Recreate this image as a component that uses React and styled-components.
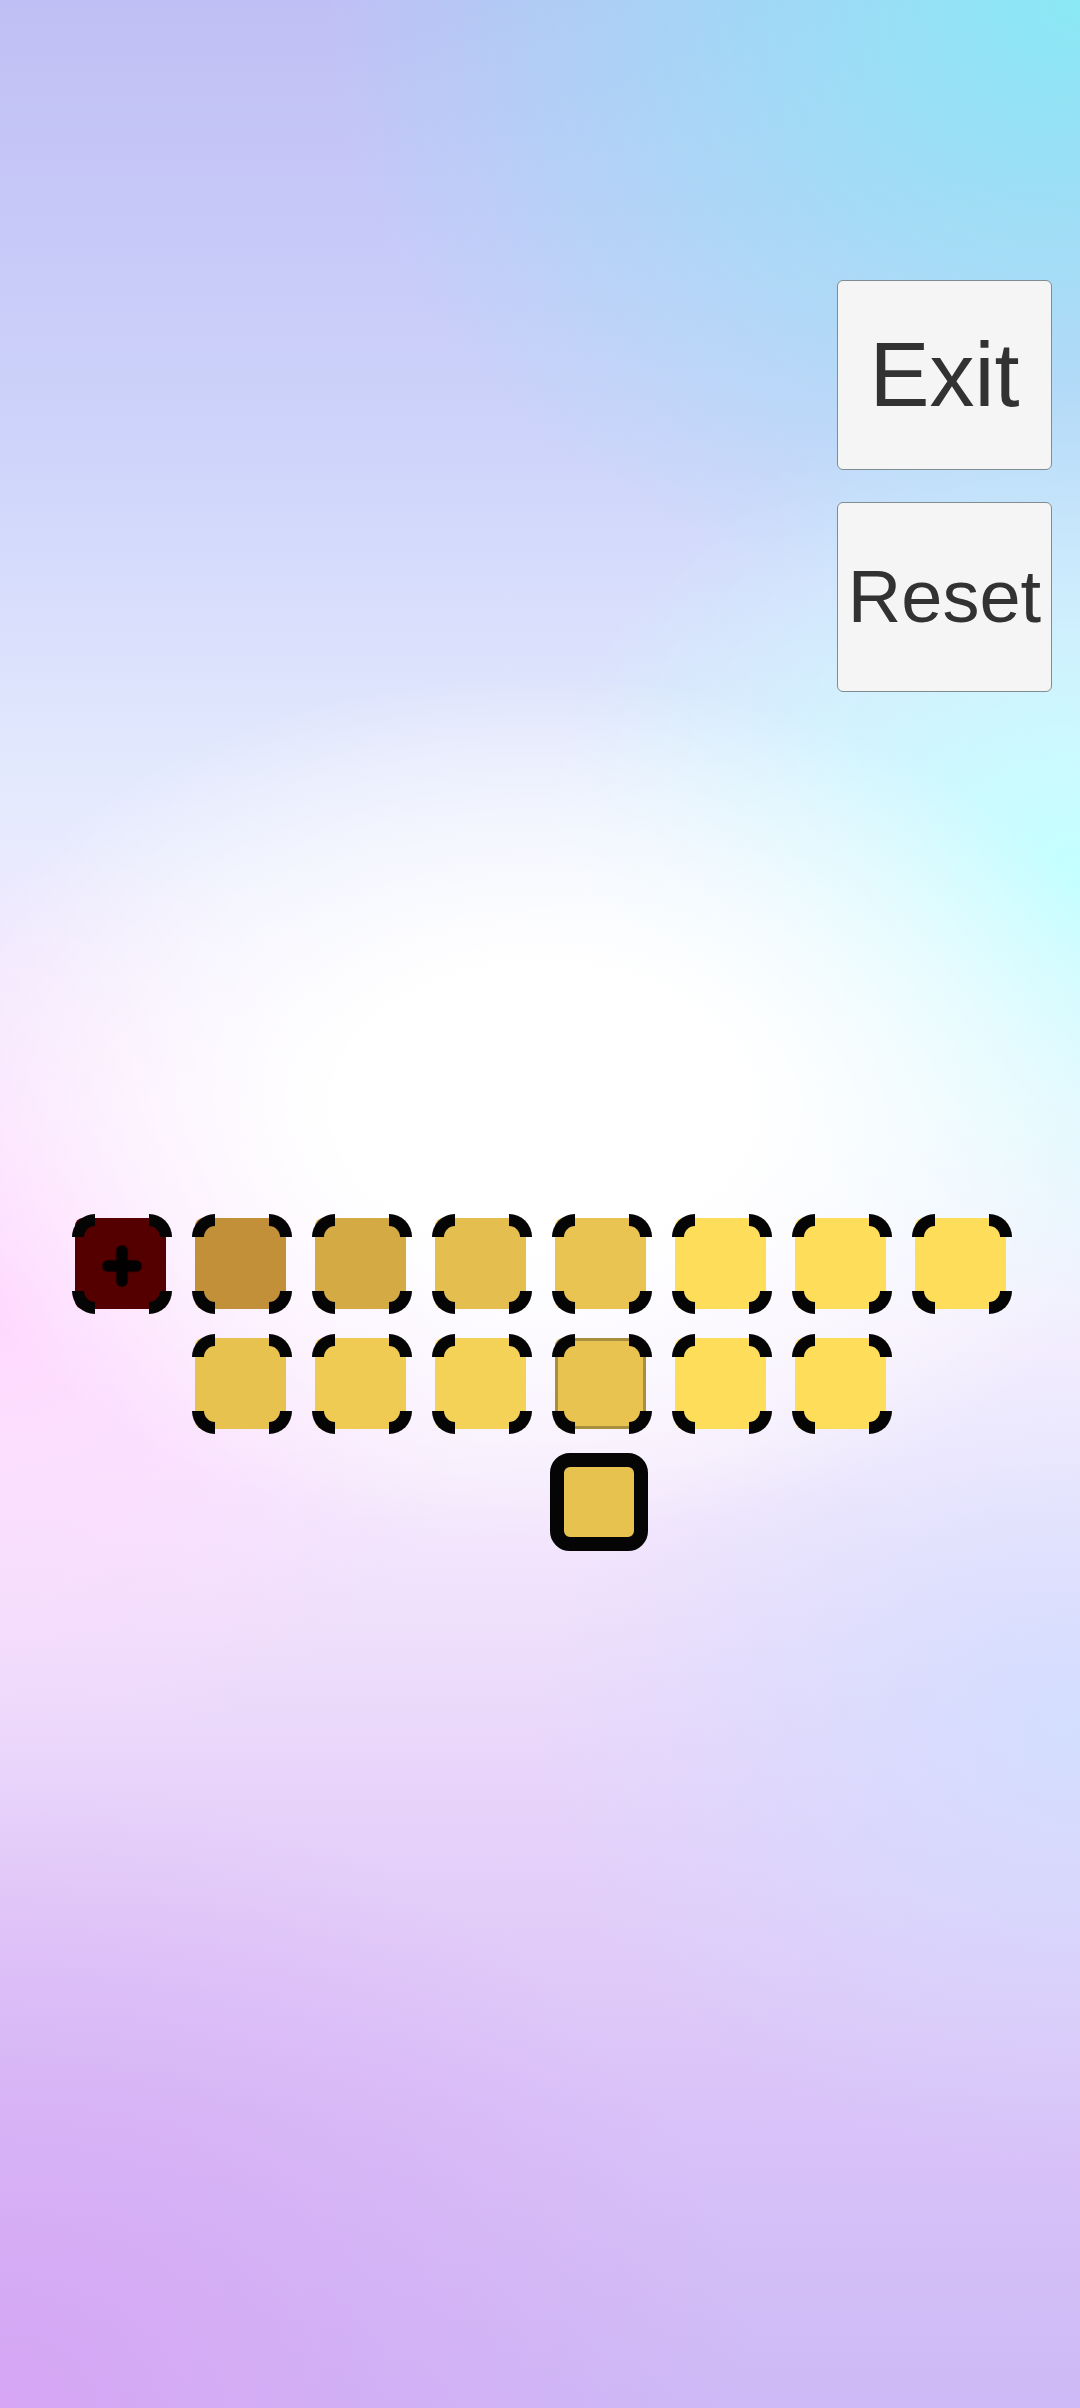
import React from "react";
import styled, { createGlobalStyle } from "styled-components";

const GlobalStyle = createGlobalStyle`
  html, body {
    margin: 0;
    padding: 0;
  }
  body {
    font-family: "Liberation Sans", Arial, sans-serif;
  }
`;

const Screen = styled.div`
  min-height: 2408px;
  width: 1080px;
  display: flex;
  flex-direction: column;
  padding-top: 280px;
  box-sizing: border-box;
  background:
    radial-gradient(ellipse 58% 18% at 50% 46%, #ffffff 0%, #ffffff 32%, rgba(255, 255, 255, 0.55) 65%, rgba(255, 255, 255, 0) 100%),
    radial-gradient(ellipse 50% 20% at 100% 36%, rgba(196, 255, 255, 1) 0%, rgba(196, 255, 255, 0) 100%),
    radial-gradient(ellipse 45% 20% at 0% 54%, rgba(255, 216, 255, 1) 0%, rgba(255, 216, 255, 0) 100%),
    radial-gradient(ellipse 50% 18% at 100% 72%, rgba(208, 222, 255, 0.9) 0%, rgba(208, 222, 255, 0) 100%),
    radial-gradient(ellipse 70% 26% at 100% 0%, rgba(138, 233, 245, 1) 0%, rgba(138, 233, 245, 0) 100%),
    radial-gradient(ellipse 70% 26% at 0% 100%, rgba(214, 166, 244, 1) 0%, rgba(214, 166, 244, 0) 100%),
    linear-gradient(
      to bottom,
      #c0bff5 0%,
      #cdd3fa 18%,
      #e3e9fd 32%,
      #f4f2fe 46%,
      #f6ecfd 60%,
      #e8d4fa 74%,
      #d9c2f8 88%,
      #cdbaf6 100%
    );
`;

const SideButtons = styled.div`
  display: flex;
  flex-direction: column;
  align-items: flex-end;
  gap: 32px;
  padding-right: 28px;
`;

const MenuButton = styled.button`
  width: 215px;
  height: 190px;
  box-sizing: border-box;
  display: flex;
  align-items: center;
  justify-content: center;
  padding: 0;
  background: #f5f5f5;
  border: 1.5px solid #7f8c92;
  border-radius: 6px;
  color: #323232;
  font-family: "Liberation Sans", Arial, sans-serif;
  font-size: ${({ $size }) => $size}px;
  line-height: 1;
  cursor: pointer;
`;

const Board = styled.div`
  margin-top: 522px;
  margin-left: 72px;
  display: grid;
  grid-template-columns: repeat(8, 100px);
  grid-auto-rows: 100px;
  column-gap: 20px;
  row-gap: 20px;
`;

const Slot = styled.div`
  position: relative;
  grid-column: ${({ $col }) => $col};
  grid-row: ${({ $row }) => $row};
`;

const Fill = styled.div`
  position: absolute;
  top: 4px;
  left: 3px;
  right: 6px;
  bottom: 5px;
  box-sizing: border-box;
  border-radius: 8px;
  background: ${({ $color }) => $color};
  border: ${({ $outline }) => ($outline ? `3.5px solid ${$outline}` : "none")};
  display: flex;
  align-items: center;
  justify-content: center;
`;

const Corner = styled.span`
  position: absolute;
  width: 23px;
  height: 23px;
  box-sizing: border-box;
  border: 0 solid #050505;
  ${({ $v }) => $v}: 0;
  ${({ $h }) => $h}: 0;
  border-${({ $v }) => $v}-width: 12px;
  border-${({ $h }) => $h}-width: 12px;
  border-${({ $v }) => $v}-${({ $h }) => $h}-radius: 23px;
`;

const Target = styled.div`
  grid-column: ${({ $col }) => $col};
  grid-row: ${({ $row }) => $row};
  width: 98px;
  height: 98px;
  margin-left: -2px;
  margin-top: -1px;
  box-sizing: border-box;
  border: 14px solid #050505;
  border-radius: 20px;
  background: #e8c24f;
`;

const PlusIcon = styled.svg`
  width: 40px;
  height: 42px;
  margin: 4px 0 0 3px;
`;

const Plus = () => (
  <PlusIcon viewBox="0 0 40 42">
    <path
      d="M20 6 V36 M6 21 H34"
      stroke="#2a0000"
      strokeWidth="12.5"
      strokeLinecap="round"
      fill="none"
    />
    <path
      d="M20 6 V36 M6 21 H34"
      stroke="#020000"
      strokeWidth="10.5"
      strokeLinecap="round"
      fill="none"
    />
  </PlusIcon>
);

const tiles = [
  { row: 1, col: 1, color: "#540000", plus: true },
  { row: 1, col: 2, color: "#c3903a" },
  { row: 1, col: 3, color: "#d4aa45" },
  { row: 1, col: 4, color: "#e4be4e" },
  { row: 1, col: 5, color: "#e9c452" },
  { row: 1, col: 6, color: "#fedd5a" },
  { row: 1, col: 7, color: "#fedd5a" },
  { row: 1, col: 8, color: "#fedd5a" },
  { row: 2, col: 2, color: "#e8c24f" },
  { row: 2, col: 3, color: "#efcb53" },
  { row: 2, col: 4, color: "#f4d257" },
  { row: 2, col: 5, color: "#e8c350", outline: "#a88f3e" },
  { row: 2, col: 6, color: "#fedd5a" },
  { row: 2, col: 7, color: "#fedd5a" },
];

const corners = [
  ["top", "left"],
  ["top", "right"],
  ["bottom", "left"],
  ["bottom", "right"],
];

const App = () => {
  return (
    <>
      <GlobalStyle />
      <Screen>
        <SideButtons>
          <MenuButton $size={90}>Exit</MenuButton>
          <MenuButton $size={74}>Reset</MenuButton>
        </SideButtons>
        <Board>
          {tiles.map((t) => (
            <Slot key={`${t.row}-${t.col}`} $row={t.row} $col={t.col}>
              <Fill $color={t.color} $outline={t.outline}>
                {t.plus && <Plus />}
              </Fill>
              {corners.map(([v, h]) => (
                <Corner key={v + h} $v={v} $h={h} />
              ))}
            </Slot>
          ))}
          <Target $row={3} $col={5} />
        </Board>
      </Screen>
    </>
  );
};

export default App;
